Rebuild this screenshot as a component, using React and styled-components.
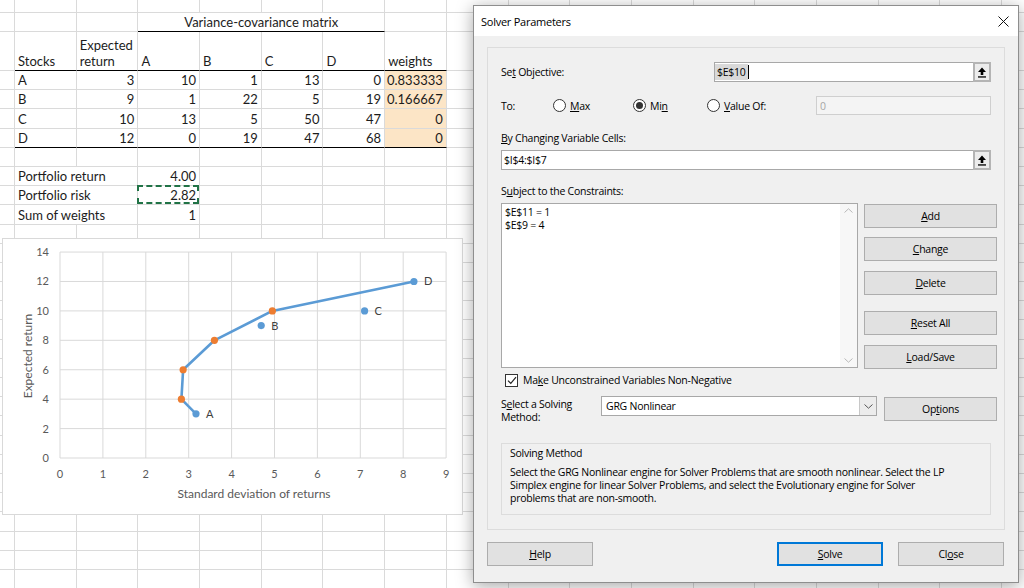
import React from 'react';
import styled, { createGlobalStyle } from 'styled-components';

const GlobalStyle = createGlobalStyle`
  html, body {
    margin: 0;
    padding: 0;
    background: #fff;
    overflow: hidden;
  }
  #root {
    width: 1024px;
    height: 588px;
    position: relative;
    overflow: hidden;
  }
`;

const COLS = 17;
const COL_W = 61.7;
const ROWS = 31;

const Page = styled.div`
  position: relative;
  width: 1024px;
  height: 588px;
  overflow: hidden;
`;

const Sheet = styled.div`
  display: grid;
  grid-template-columns: 15px repeat(${COLS}, ${COL_W}px);
  grid-template-rows: 13px 19px 39px repeat(${ROWS - 3}, 19.2px);
  font-family: Lato, "Liberation Sans", sans-serif;
  font-size: 13px;
  color: #1c1c1c;
`;

const Cell = styled.div`
  position: relative;
  box-sizing: border-box;
  grid-column: span ${p => p.$span || 1};
  border-right: 1px solid #dadada;
  border-bottom: 1px solid ${p => (p.$rule ? '#000' : '#dadada')};
  background: ${p => p.$bg || 'transparent'};
  display: flex;
  align-items: flex-end;
  justify-content: ${p =>
    p.$align === 'right' ? 'flex-end' : p.$align === 'center' ? 'center' : 'flex-start'};
  padding: 0 3px 1px;
  line-height: 16px;
  white-space: pre;
  text-align: left;

  &::after {
    content: '';
    display: ${p => (p.$dashed ? 'block' : 'none')};
    position: absolute;
    inset: -1px 0 0 -1px;
    border: 2px dashed #217346;
  }
`;

const stocks = [
  ['A', 3, [10, 1, 13, 0], '0.833333'],
  ['B', 9, [1, 22, 5, 19], '0.166667'],
  ['C', 10, [13, 5, 50, 47], '0'],
  ['D', 12, [0, 19, 47, 68], '0'],
];

const WEIGHT_BG = '#fce5c6';

const content = {
  1: { 3: { text: 'Variance-covariance matrix', span: 4, align: 'center', rule: true } },
  2: {
    1: { text: 'Stocks', rule: true },
    2: { text: 'Expected\nreturn', rule: true },
    3: { text: 'A', rule: true },
    4: { text: 'B', rule: true },
    5: { text: 'C', rule: true },
    6: { text: 'D', rule: true },
    7: { text: 'weights', rule: true },
  },
  8: { 1: { text: 'Portfolio return', span: 2 }, 3: { text: '4.00', align: 'right' } },
  9: { 1: { text: 'Portfolio risk', span: 2 }, 3: { text: '2.82', align: 'right', dashed: true } },
  10: { 1: { text: 'Sum of weights', span: 2 }, 3: { text: '1', align: 'right' } },
};

stocks.forEach(([name, ret, cov, w], i) => {
  const r = 3 + i;
  const last = i === stocks.length - 1;
  content[r] = {
    1: { text: name, rule: last },
    2: { text: String(ret), align: 'right', rule: last },
    7: { text: w, align: 'right', rule: last, bg: WEIGHT_BG },
  };
  cov.forEach((v, j) => {
    content[r][3 + j] = { text: String(v), align: 'right', rule: last };
  });
});

function SheetGrid() {
  const cells = [];
  for (let r = 0; r < ROWS; r++) {
    let c = 0;
    while (c < COLS + 1) {
      const d = (content[r] && content[r][c]) || {};
      cells.push(
        <Cell
          key={`${r}-${c}`}
          $span={d.span}
          $align={d.align}
          $rule={d.rule}
          $bg={d.bg}
          $dashed={d.dashed}
        >
          {d.text}
        </Cell>
      );
      c += d.span || 1;
    }
  }
  return <Sheet>{cells}</Sheet>;
}

/* ---------- chart ---------- */

const ChartBox = styled.div`
  position: absolute;
  left: 2px;
  top: 238px;
  width: 461px;
  height: 277px;
  box-sizing: border-box;
  background: #fff;
  border: 1px solid #d9d9d9;
`;

const X0 = 57;
const XU = 42.9;
const Y0 = 219;
const YU = 14.71;
const px = v => X0 + v * XU;
const py = v => Y0 - v * YU;

const frontier = [[3.17, 3], [2.83, 4], [2.87, 6], [3.6, 8], [4.95, 10], [8.25, 12]];
const stockPoints = [['A', 3.17, 3], ['B', 4.69, 9], ['C', 7.1, 10], ['D', 8.25, 12]];

function Chart() {
  const xs = [0, 1, 2, 3, 4, 5, 6, 7, 8, 9];
  const ys = [0, 2, 4, 6, 8, 10, 12, 14];
  return (
    <ChartBox>
      <svg width="459" height="275" style={{ display: 'block' }} fontFamily="Lato, 'Liberation Sans', sans-serif">
        {xs.map(v => (
          <line key={`gx${v}`} x1={px(v)} x2={px(v)} y1={py(14)} y2={py(0)} stroke="#d9d9d9" strokeWidth="1" />
        ))}
        {ys.map(v => (
          <line key={`gy${v}`} x1={px(0)} x2={px(9)} y1={py(v)} y2={py(v)} stroke="#d9d9d9" strokeWidth="1" />
        ))}
        {ys.map(v => (
          <text key={`ly${v}`} x={46} y={py(v) + 4} fontSize="11" fill="#595959" textAnchor="end">{v}</text>
        ))}
        {xs.map(v => (
          <text key={`lx${v}`} x={px(v)} y={239} fontSize="11" fill="#595959" textAnchor="middle">{v}</text>
        ))}
        <text x={251} y={259} fontSize="12" fill="#595959" textAnchor="middle">Standard deviation of returns</text>
        <text transform="translate(29,117) rotate(-90)" fontSize="12" fill="#595959" textAnchor="middle">Expected return</text>

        <polyline
          points={frontier.map(([x, y]) => `${px(x)},${py(y)}`).join(' ')}
          fill="none"
          stroke="#5b9bd5"
          strokeWidth="2.6"
          strokeLinejoin="round"
          strokeLinecap="round"
        />
        {frontier.slice(1, 5).map(([x, y]) => (
          <circle key={`o${x}`} cx={px(x)} cy={py(y)} r="3.6" fill="#ed7d31" />
        ))}
        {stockPoints.map(([n, x, y]) => (
          <g key={n}>
            <circle cx={px(x)} cy={py(y)} r="3.6" fill="#5b9bd5" />
            <text x={px(x) + 10} y={py(y) + 4} fontSize="11" fill="#404040">{n}</text>
          </g>
        ))}
      </svg>
    </ChartBox>
  );
}

/* ---------- solver dialog ---------- */

const Dialog = styled.div`
  position: absolute;
  left: 473px;
  top: 5px;
  width: 546px;
  box-sizing: border-box;
  border: 1px solid #8e8e8e;
  background: #f0f0f0;
  box-shadow: 0 3px 16px rgba(0, 0, 0, 0.35);
  font-family: "Open Sans", "Noto Sans", sans-serif;
  font-size: 10.5px;
  letter-spacing: -0.25px;
  color: #000;
`;

const TitleBar = styled.div`
  height: 30px;
  background: #fff;
  display: flex;
  align-items: center;
  justify-content: space-between;
  padding: 0 9px 0 7px;
`;

const Title = styled.span`
  font-size: 11px;
`;

const Body = styled.div`
  padding: 11px 13px 16px;
`;

const Panel = styled.div`
  box-sizing: border-box;
  height: 483px;
  border: 1px solid #dcdcdc;
  padding: 14px 7px 0 13px;
  display: flex;
  flex-direction: column;
`;

const Row = styled.div`
  display: flex;
  align-items: ${p => p.$align || 'center'};
  height: ${p => (p.$h ? `${p.$h}px` : 'auto')};
  margin-top: ${p => p.$mt || 0}px;
  margin-right: ${p => (p.$full ? 0 : 6)}px;
`;

const Label = styled.span`
  width: ${p => (p.$w ? `${p.$w}px` : 'auto')};
  flex-shrink: 0;
  line-height: ${p => p.$lh || 16}px;
  margin-top: ${p => p.$mt || 0}px;
  white-space: nowrap;
`;

const TextBox = styled.div`
  flex: 1;
  align-self: stretch;
  box-sizing: border-box;
  display: flex;
  background: ${p => (p.$disabled ? '#f4f4f4' : '#fff')};
  border: 1px solid ${p => (p.$disabled ? '#cfcfcf' : '#a8a8a8')};
`;

const BoxText = styled.span`
  flex: 1;
  display: flex;
  align-items: center;
  padding-left: ${p => p.$pad ?? 2}px;
  color: ${p => (p.$muted ? '#a6a6a6' : '#000')};
`;

const Selected = styled.span`
  background: #d9d9d9;
  padding: 0 2px;
  line-height: 16px;
`;

const Caret = styled.span`
  width: 1px;
  height: 14px;
  background: #000;
`;

const RefButton = styled.span`
  width: 18px;
  margin: -1px -1px -1px 0;
  box-sizing: border-box;
  border: 2px solid #b4b4b4;
  background: #ececec;
  display: flex;
  align-items: center;
  justify-content: center;
`;

const RadioOption = styled.span`
  display: flex;
  align-items: center;
  gap: 4px;
  width: ${p => p.$w}px;
  flex-shrink: 0;
`;

const RadioCircle = styled.span`
  width: 13px;
  height: 13px;
  box-sizing: border-box;
  border: 1px solid #333;
  border-radius: 50%;
  background: #fff;
  display: flex;
  align-items: center;
  justify-content: center;

  &::after {
    content: '';
    display: ${p => (p.$on ? 'block' : 'none')};
    width: 7px;
    height: 7px;
    border-radius: 50%;
    background: #333;
  }
`;

const ListBox = styled.div`
  width: 357px;
  height: 165px;
  box-sizing: border-box;
  border: 1px solid #a8a8a8;
  background: #fff;
  display: flex;
`;

const ListItems = styled.div`
  flex: 1;
  padding: 2px 3px;
  line-height: 12.5px;
`;

const ScrollTrack = styled.div`
  width: 17px;
  background: #f7f7f7;
  display: flex;
  flex-direction: column;
  justify-content: space-between;
  align-items: center;
  padding: 4px 0;
`;

const ButtonColumn = styled.div`
  display: flex;
  flex-direction: column;
  margin-left: 6px;
`;

const Button = styled.div`
  box-sizing: border-box;
  width: ${p => p.$w || 133}px;
  height: 24px;
  margin-top: ${p => p.$mt || 0}px;
  margin-left: ${p => p.$ml || 0}px;
  background: #e1e1e1;
  border: ${p => (p.$primary ? '2px solid #0078d7' : '1px solid #adadad')};
  display: flex;
  align-items: center;
  justify-content: center;
  flex-shrink: 0;
`;

const CheckBox = styled.span`
  width: 13px;
  height: 13px;
  box-sizing: border-box;
  border: 1px solid #333;
  background: #fff;
  margin: 0 5px 0 4px;
  display: flex;
  align-items: center;
  justify-content: center;
`;

const SelectBox = styled.div`
  width: 276px;
  height: 20px;
  box-sizing: border-box;
  border: 1px solid #a8a8a8;
  background: #fff;
  display: flex;
  flex-shrink: 0;
`;

const DropButton = styled.span`
  width: 16px;
  border-left: 1px solid #c8c8c8;
  background: #ececec;
  display: flex;
  align-items: center;
  justify-content: center;
`;

const Group = styled.div`
  box-sizing: border-box;
  height: 72px;
  margin: 19px 6px 0 0;
  border: 1px solid #dcdcdc;
  padding: 1px 8px;
`;

const GroupTitle = styled.div`
  line-height: 16px;
`;

const Description = styled.div`
  margin-top: 5px;
  line-height: 13px;
  white-space: nowrap;
`;

const Footer = styled.div`
  display: flex;
  align-items: center;
  gap: 15px;
  margin-top: 12px;
  padding-right: 1px;
`;

const Spacer = styled.div`
  flex: 1;
`;

const ArrowIcon = () => (
  <svg width="10" height="11" viewBox="0 0 10 11">
    <path d="M5 0.5 L9 5 H6.3 V8 H3.7 V5 H1 Z" fill="#000" />
    <rect x="1" y="9.3" width="8" height="1.3" fill="#000" />
  </svg>
);

const Chevron = ({ up, color = '#b8b8b8' }) => (
  <svg width="9" height="5" viewBox="0 0 9 5">
    <path d={up ? 'M0.5 4.5 L4.5 0.8 L8.5 4.5' : 'M0.5 0.5 L4.5 4.2 L8.5 0.5'} fill="none" stroke={color} strokeWidth="1" />
  </svg>
);

function SolverDialog() {
  return (
    <Dialog>
      <TitleBar>
        <Title>Solver Parameters</Title>
        <svg width="11" height="11" viewBox="0 0 11 11">
          <path d="M0.5 0.5 L10.5 10.5 M10.5 0.5 L0.5 10.5" stroke="#111" strokeWidth="1" />
        </svg>
      </TitleBar>
      <Body>
        <Panel>
          <Row $h={20}>
            <Label $w={213}>Se<u>t</u> Objective:</Label>
            <TextBox>
              <BoxText $pad={0}>
                <Selected>$E$10</Selected>
                <Caret />
              </BoxText>
              <RefButton><ArrowIcon /></RefButton>
            </TextBox>
          </Row>

          <Row $h={19} $mt={14}>
            <Label $w={52}>To:</Label>
            <RadioOption $w={80}><RadioCircle /><span><u>M</u>ax</span></RadioOption>
            <RadioOption $w={74}><RadioCircle $on /><span>Mi<u>n</u></span></RadioOption>
            <RadioOption $w={109}><RadioCircle /><span><u>V</u>alue Of:</span></RadioOption>
            <TextBox $disabled>
              <BoxText $muted $pad={3}>0</BoxText>
            </TextBox>
          </Row>

          <Label $mt={15}><u>B</u>y Changing Variable Cells:</Label>
          <Row $h={20} $mt={4}>
            <TextBox>
              <BoxText>$I$4:$I$7</BoxText>
              <RefButton><ArrowIcon /></RefButton>
            </TextBox>
          </Row>

          <Label $mt={13}>S<u>u</u>bject to the Constraints:</Label>
          <Row $align="flex-start" $mt={4} $full>
            <ListBox>
              <ListItems>
                <div>$E$11 = 1</div>
                <div>$E$9 = 4</div>
              </ListItems>
              <ScrollTrack>
                <Chevron up />
                <Chevron />
              </ScrollTrack>
            </ListBox>
            <ButtonColumn>
              <Button $mt={1}><span><u>A</u>dd</span></Button>
              <Button $mt={9}><span><u>C</u>hange</span></Button>
              <Button $mt={10}><span><u>D</u>elete</span></Button>
              <Button $mt={16}><span><u>R</u>eset All</span></Button>
              <Button $mt={10}><span><u>L</u>oad/Save</span></Button>
            </ButtonColumn>
          </Row>

          <Row $h={16} $mt={3}>
            <CheckBox>
              <svg width="10" height="9" viewBox="0 0 10 9">
                <path d="M1 4.6 L3.8 7.4 L9 1.2" fill="none" stroke="#222" strokeWidth="1.2" />
              </svg>
            </CheckBox>
            <Label>Ma<u>k</u>e Unconstrained Variables Non-Negative</Label>
          </Row>

          <Row $align="flex-start" $mt={8} $full>
            <Label $w={100} $lh={13} $mt={2}>
              S<u>e</u>lect a Solving
              <br />
              Method:
            </Label>
            <SelectBox>
              <BoxText $pad={4}>GRG Nonlinear</BoxText>
              <DropButton><Chevron color="#555" /></DropButton>
            </SelectBox>
            <Button $w={113} $mt={1} $ml={7}><span>Op<u>t</u>ions</span></Button>
          </Row>

          <Group>
            <GroupTitle>Solving Method</GroupTitle>
            <Description>
              Select the GRG Nonlinear engine for Solver Problems that are smooth nonlinear. Select the LP
              <br />
              Simplex engine for linear Solver Problems, and select the Evolutionary engine for Solver
              <br />
              problems that are non-smooth.
            </Description>
          </Group>
        </Panel>

        <Footer>
          <Button $w={106}><span><u>H</u>elp</span></Button>
          <Spacer />
          <Button $w={106} $primary><span><u>S</u>olve</span></Button>
          <Button $w={106}><span>Cl<u>o</u>se</span></Button>
        </Footer>
      </Body>
    </Dialog>
  );
}

export default function App() {
  return (
    <Page>
      <GlobalStyle />
      <SheetGrid />
      <Chart />
      <SolverDialog />
    </Page>
  );
}
